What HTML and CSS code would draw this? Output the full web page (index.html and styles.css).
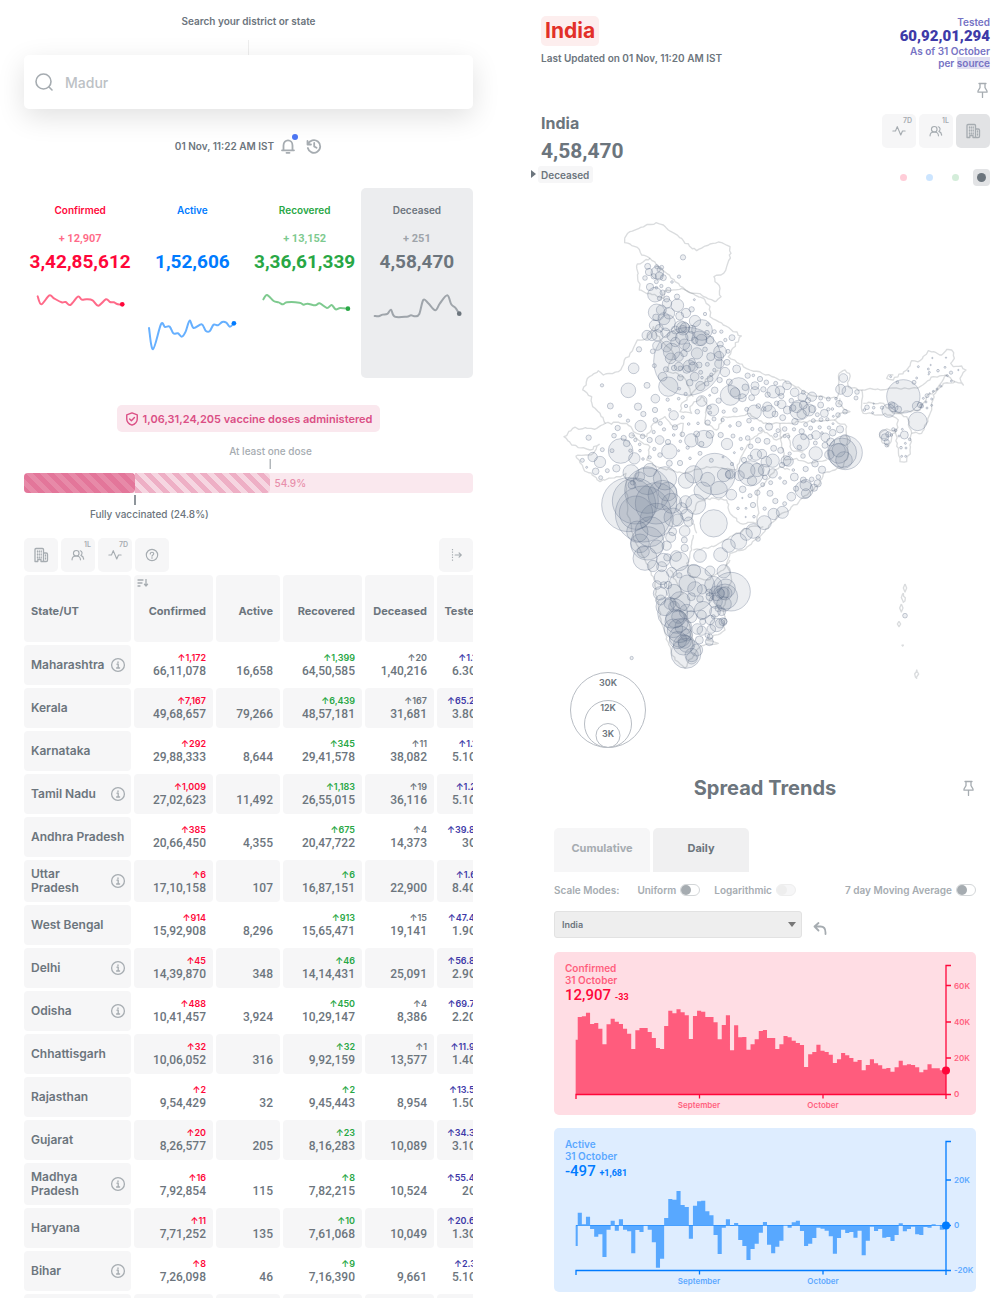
FILE: index.html
```html
<!DOCTYPE html>
<html lang="en">
<head>
<meta charset="utf-8">
<meta name="viewport" content="width=device-width, initial-scale=1">
<title>India</title>
<link rel="stylesheet" href="styles.css">
</head>
<body>
<svg class="sprite" aria-hidden="true">
  <symbol id="i-info" viewBox="0 0 16 16"><circle cx="8" cy="8" r="6.4"/><path d="M7 7.2h1.2v3.6M6.6 11h3M8 4.8v.9"/></symbol>
  <symbol id="i-pin" viewBox="0 0 16 16"><path d="M5 1.500h7M6 1.500v4.200L4 9v1.200h9V9l-2-3.300V1.500M8.500 10.200V15.500"/></symbol>
  <symbol id="i-pulse" viewBox="0 0 16 16"><path d="M1 8h3l2-5 4 9.500 2-4.500h3"/></symbol>
  <symbol id="i-people" viewBox="0 0 16 16"><circle cx="6" cy="6" r="3.200"/><path d="M1.200 13.500c0-2.800 2-4.300 4.800-4.300s4.800 1.500 4.800 4.300M10.500 3.200c2.300.3 3 3.600.8 5.200 1.900.7 3 2 3.200 4.300"/></symbol>
  <symbol id="i-building" viewBox="0 0 16 16"><path d="M2 14.500V2.500q0-1 1-1h6.500q1 0 1 1v12H8v-2H4.800v2zM10.500 6h2.700q1.300 0 1.300 1.300v5.900q0 1.300-1.300 1.300h-2.700"/><path stroke-dasharray="1 2" d="M4.500 4v7M6.300 4v7M8.200 4v7M12.500 8v5"/></symbol>
</svg>
<main class="home">
  <section class="left">
    <label class="search-label" for="search">Search your district or state</label>
    <div class="search-line"></div>
    <div class="search">
      <svg class="icon search-icon" viewBox="0 0 20 20"><circle cx="9.500" cy="9.500" r="7.500"/><path d="M15 15l3 3"/></svg>
      <input id="search" type="text" placeholder="Madur">
    </div>
    <div class="actions">
      <span class="stamp">01 Nov, 11:22 AM IST</span>
      <button class="bare bell" aria-label="Notifications"><svg class="icon i16 bold" viewBox="0 0 16 16"><path d="M2 12.300h12M3.500 12V7.500c0-6.800 9-6.800 9 0V12M6.500 14.800h3"/></svg><i class="badge"></i></button>
      <button class="bare history" aria-label="Timeline"><svg class="icon i16 bold" viewBox="0 0 16 16"><path d="M1.500 3v3.500H5M2 6.300a6.300 6.300 0 1 1-.2 3.700M8.200 5v3.500l2.300 1.300"/></svg></button>
    </div>

    <div class="level">
      <div class="stat confirmed"><h5>Confirmed</h5><h4>+ 12,907</h4><h1>3,42,85,612</h1>
        <svg class="spark" viewBox="72 330 337 220" data-points="113 349,124 373,148 346,162 355,185 367,197 366,211 375,234 350,245 359,260 358,278 361,295 377,318 358,330 366,342 367,354 373,367 373"></svg></div>
      <div class="stat active"><h5>Active</h5><h4></h4><h1>1,52,606</h1>
        <svg class="spark" viewBox="409 330 337 220" data-points="448 444,460 508,484 433,496 441,510 440,521 460,535 460,547 470,558 455,570 422,582 444,606 433,618 452,630 454,642 434,655 436,668 426,680 428,691 440,703 430"></svg></div>
      <div class="stat recovered"><h5>Recovered</h5><h4>+ 13,152</h4><h1>3,36,61,339</h1>
        <svg class="spark" viewBox="746 330 337 220" data-points="789 358,800 345,820 363,835 367,848 373,860 367,897 368,910 374,922 371,945 376,958 370,980 384,994 375,1006 388,1020 384,1043 386"></svg></div>
      <div class="stat deceased is-on"><h5>Deceased</h5><h4>+ 251</h4><h1>4,58,470</h1>
        <svg class="spark" viewBox="1083 330 337 220" data-points="1124 408,1136 409,1148 404,1162 402,1173 389,1184 410,1220 410,1233 406,1246 409,1258 402,1270 360,1285 370,1306 391,1320 370,1342 346,1354 373,1366 383,1378 401"></svg></div>
    </div>

    <div class="pill"><svg class="icon i14" viewBox="0 0 16 16"><path d="M8 1l6 2.200V8c0 3.500-2.500 5.800-6 7-3.500-1.200-6-3.500-6-7V3.200zM5.300 8l2 2 3.500-3.800"/></svg>1,06,31,24,205 vaccine doses administered</div>

    <div class="vaccine">
      <div class="mark one"><span>At least one dose</span><i></i></div>
      <div class="progress"><div class="fill both" style="width:24.8%"></div><div class="fill first" style="width:30.1%"></div><span>54.9%</span></div>
      <div class="mark two"><i></i><span>Fully vaccinated (24.8%)</span></div>
    </div>

    <div class="toolbar">
      <button class="tool" aria-label="Districts"><svg class="icon i16"><use href="#i-building"/></svg></button>
      <button class="tool" aria-label="Per lakh"><svg class="icon i14"><use href="#i-people"/></svg><sup>1L</sup></button>
      <button class="tool" aria-label="Seven day average"><svg class="icon i14"><use href="#i-pulse"/></svg><sup>7D</sup></button>
      <button class="tool" aria-label="Help"><svg class="icon i14" viewBox="0 0 16 16"><circle cx="8" cy="8" r="6.500"/><path d="M6 6.800c0-2.600 4-2.400 4-.2C10 8 8 7.800 8 9.300M8 10.800v1"/></svg></button>
      <button class="tool push" aria-label="Expand table"><svg class="icon i14" viewBox="0 0 16 16"><path stroke-linecap="butt" stroke-dasharray="1.500 1.500" d="M4 1v14"/><path d="M7 8h7M11.500 5.500L14 8l-2.500 2.500"/></svg></button>
    </div>

    <div class="table-wrap">
      <table>
        <colgroup><col class="c1"><col class="c2"><col class="c3"><col class="c4"><col class="c5"><col class="c6"></colgroup>
        <thead><tr><th>State/UT</th><th><svg class="icon sort" viewBox="0 0 12 8"><path d="M1 1h5M1 4h4M1 7h2M9 0v7M7.500 5.300L9 7l1.500-1.700"/></svg>Confirmed</th><th>Active</th><th>Recovered</th><th>Deceased</th><th>Tested</th></tr></thead>
        <tbody>
        <tr><th><div>Maharashtra<svg class="icon i16"><use href="#i-info"/></svg></div></th><td><b class="c">↑1,172</b>66,11,078</td><td>16,658</td><td><b class="r">↑1,399</b>64,50,585</td><td><b>↑20</b>1,40,216</td><td><b class="t">↑1.1L</b>6.3Cr</td></tr>
        <tr><th><div>Kerala</div></th><td><b class="c">↑7,167</b>49,68,657</td><td>79,266</td><td><b class="r">↑6,439</b>48,57,181</td><td><b>↑167</b>31,681</td><td><b class="t">↑65.2K</b>3.8Cr</td></tr>
        <tr><th><div>Karnataka</div></th><td><b class="c">↑292</b>29,88,333</td><td>8,644</td><td><b class="r">↑345</b>29,41,578</td><td><b>↑11</b>38,082</td><td><b class="t">↑1.1L</b>5.1Cr</td></tr>
        <tr><th><div>Tamil Nadu<svg class="icon i16"><use href="#i-info"/></svg></div></th><td><b class="c">↑1,009</b>27,02,623</td><td>11,492</td><td><b class="r">↑1,183</b>26,55,015</td><td><b>↑19</b>36,116</td><td><b class="t">↑1.2L</b>5.1Cr</td></tr>
        <tr><th><div>Andhra Pradesh</div></th><td><b class="c">↑385</b>20,66,450</td><td>4,355</td><td><b class="r">↑675</b>20,47,722</td><td><b>↑4</b>14,373</td><td><b class="t">↑39.8K</b>3Cr</td></tr>
        <tr class="tall"><th><div>Uttar<br>Pradesh<svg class="icon i16"><use href="#i-info"/></svg></div></th><td><b class="c">↑6</b>17,10,158</td><td>107</td><td><b class="r">↑6</b>16,87,151</td><td>22,900</td><td><b class="t">↑1.6L</b>8.4Cr</td></tr>
        <tr><th><div>West Bengal</div></th><td><b class="c">↑914</b>15,92,908</td><td>8,296</td><td><b class="r">↑913</b>15,65,471</td><td><b>↑15</b>19,141</td><td><b class="t">↑47.4K</b>1.9Cr</td></tr>
        <tr><th><div>Delhi<svg class="icon i16"><use href="#i-info"/></svg></div></th><td><b class="c">↑45</b>14,39,870</td><td>348</td><td><b class="r">↑46</b>14,14,431</td><td>25,091</td><td><b class="t">↑56.8K</b>2.9Cr</td></tr>
        <tr><th><div>Odisha<svg class="icon i16"><use href="#i-info"/></svg></div></th><td><b class="c">↑488</b>10,41,457</td><td>3,924</td><td><b class="r">↑450</b>10,29,147</td><td><b>↑4</b>8,386</td><td><b class="t">↑69.7K</b>2.2Cr</td></tr>
        <tr><th><div>Chhattisgarh</div></th><td><b class="c">↑32</b>10,06,052</td><td>316</td><td><b class="r">↑32</b>9,92,159</td><td><b>↑1</b>13,577</td><td><b class="t">↑11.9K</b>1.4Cr</td></tr>
        <tr><th><div>Rajasthan</div></th><td><b class="c">↑2</b>9,54,429</td><td>32</td><td><b class="r">↑2</b>9,45,443</td><td>8,954</td><td><b class="t">↑13.5K</b>1.5Cr</td></tr>
        <tr><th><div>Gujarat</div></th><td><b class="c">↑20</b>8,26,577</td><td>205</td><td><b class="r">↑23</b>8,16,283</td><td>10,089</td><td><b class="t">↑34.3K</b>3.1Cr</td></tr>
        <tr class="tall"><th><div>Madhya<br>Pradesh<svg class="icon i16"><use href="#i-info"/></svg></div></th><td><b class="c">↑16</b>7,92,854</td><td>115</td><td><b class="r">↑8</b>7,82,215</td><td>10,524</td><td><b class="t">↑55.4K</b>2Cr</td></tr>
        <tr><th><div>Haryana</div></th><td><b class="c">↑11</b>7,71,252</td><td>135</td><td><b class="r">↑10</b>7,61,068</td><td>10,049</td><td><b class="t">↑20.6K</b>1.3Cr</td></tr>
        <tr><th><div>Bihar<svg class="icon i16"><use href="#i-info"/></svg></div></th><td><b class="c">↑8</b>7,26,098</td><td>46</td><td><b class="r">↑9</b>7,16,390</td><td>9,661</td><td><b class="t">↑2.3L</b>5.1Cr</td></tr>
        <tr><th></th><td></td><td></td><td></td><td></td><td></td></tr>
        </tbody>
      </table>
    </div>
  </section>

  <section class="right">
    <header class="region">
      <div><h1>India</h1><p class="updated">Last Updated on 01 Nov, 11:20 AM IST</p></div>
      <div class="tested"><span>Tested</span><strong>60,92,01,294</strong><span>As of 31 October</span><span>per <a href="#source">source</a></span></div>
    </header>
    <div class="pin-row"><svg class="icon i16"><use href="#i-pin"/></svg></div>
    <div class="map-head">
      <div>
        <h2>India</h2>
        <p class="total">4,58,470</p>
        <button class="picker">Deceased</button>
      </div>
      <div class="switches">
        <div class="tools">
          <button class="tool" aria-label="Seven day average"><svg class="icon i14"><use href="#i-pulse"/></svg><sup>7D</sup></button>
          <button class="tool" aria-label="Per lakh"><svg class="icon i14"><use href="#i-people"/></svg><sup>1L</sup></button>
          <button class="tool is-on" aria-label="Districts"><svg class="icon i16"><use href="#i-building"/></svg></button>
        </div>
        <div class="dots">
          <button class="dot confirmed" aria-label="Confirmed"></button><button class="dot active" aria-label="Active"></button><button class="dot recovered" aria-label="Recovered"></button><button class="dot deceased is-on" aria-label="Deceased"></button>
        </div>
      </div>
    </div>
    <svg class="map" viewBox="-27 -72 1347 1692">
      <g id="borders"></g>
      <g id="bubbles"></g>
      <g class="legend" transform="scale(3)">
        <circle cx="58" cy="500" r="37.500"/><circle cx="58" cy="514" r="23.500"/><circle cx="58" cy="525.500" r="12"/>
        <text x="58" y="476">30K</text><text x="58" y="501">12K</text><text x="58" y="527">3K</text>
      </g>
    </svg>

    <div class="trends">
      <div class="trends-title"><h2>Spread Trends</h2><svg class="icon i16"><use href="#i-pin"/></svg></div>
      <div class="tabs"><button>Cumulative</button><button class="is-on">Daily</button></div>
      <div class="modes">
        <span class="modes-name">Scale Modes:</span>
        <label>Uniform<input type="checkbox"></label>
        <label>Logarithmic<input type="checkbox" disabled></label>
        <label class="push">7 day Moving Average<input type="checkbox"></label>
      </div>
      <div class="chooser">
        <select aria-label="Region"><option>India</option></select>
        <button class="bare" aria-label="Reset"><svg class="icon i14 bold" viewBox="0 0 14 14"><path d="M5.500 2L1.500 5.500l4 4M1.500 5.500h6q5 0 5 6v1.500"/></svg></button>
      </div>
      <div class="chart confirmed">
        <div class="chart-text"><h5>Confirmed</h5><h5>31 October</h5><p>12,907 <small>-33</small></p></div>
        <svg viewBox="0 0 422 163">
          <g class="bars" data-base="448" data-shift="7" data-tops="284 216 214 203 237 234 251 298 238 221 230 237 251 266 312 256 249 249 261 279 309 312 243 197 205 193 202 211 282 213 197 200 216 216 232 283 240 211 316 241 277 276 314 298 283 258 255 279 279 312 298 273 277 287 294 300 366 328 321 299 317 321 329 354 343 324 331 339 350 345 376 360 343 355 361 371 369 380 367 347 361 358 360 367 382 374 358 370 370 376 377"></g>
          <path class="axis" d="M22 147v-4.500H392M145.500 142.500v4M269 142.500v4M392 147V13.500h5M392 33.500h5M392 70h5M392 106h5M392 142.500h5"/>
          <circle cx="392" cy="118.500" r="4"/>
          <g class="labels"><text x="400" y="37">60K</text><text x="400" y="73">40K</text><text x="400" y="109">20K</text><text x="400" y="145">0</text><text class="mid" x="145" y="156">September</text><text class="mid" x="269" y="156">October</text></g>
        </svg>
      </div>
      <div class="chart active">
        <div class="chart-text"><h5>Active</h5><h5>31 October</h5><p>-497 <small>+1,681</small></p></div>
        <svg viewBox="0 0 422 164">
          <g class="bars" data-base="316" data-shift="8" data-tops="378 278 313 290 327 350 343 411 329 302 332 298 329 334 400 330 336 317 329 367 443 416 294 237 239 213 255 261 356 257 244 242 274 286 345 402 323 298 318 309 360 378 420 387 371 338 306 374 400 380 362 316 323 307 302 333 378 371 354 323 326 332 349 401 354 329 339 336 353 332 406 362 320 333 327 353 351 363 345 310 334 327 320 343 345 321 323 313 316 329 319"></g>
          <path class="zero" d="M22 97.500H392"/>
          <path class="axis" d="M22 147v-4.500H392M145.500 142.500v4M269 142.500v4M392 147V13.500h5M392 52h5M392 97.500h5M392 142.500h5"/>
          <circle cx="392" cy="97.500" r="4"/>
          <g class="labels"><text x="400" y="55">20K</text><text x="400" y="100">0</text><text x="400" y="145">-20K</text><text class="mid" x="145" y="156">September</text><text class="mid" x="269" y="156">October</text></g>
        </svg>
      </div>
    </div>
  </section>
</main>
<script src="script.js"></script>
</body>
</html>
```
FILE: styles.css
```css
* { box-sizing: border-box; margin: 0; padding: 0; }
body {
  height: 100vh; overflow: hidden; background: #fff; color: #6c757d;
  font-family: Inter, "Noto Sans", sans-serif; font-size: 12px; font-weight: 600;
}
button, input, select { font: inherit; color: inherit; border: 0; background: none; }
button { cursor: pointer; }
h1, h2, h4, h5 { font-weight: 700; }
.sprite { position: absolute; width: 0; height: 0; }
.icon { fill: none; stroke: #a6acb1; stroke-width: 1.3; stroke-linecap: round; stroke-linejoin: round; flex: none; }
.icon.bold { stroke-width: 1.8; }
.i16 { width: 16px; height: 16px; }
.i14 { width: 14px; height: 14px; }
.push { margin-left: auto; }

.home { display: grid; grid-template-columns: minmax(0, 1fr) minmax(0, 1fr); gap: 68px; padding: 0 17px 0 24px; }
.left { display: flex; flex-direction: column; padding-top: 14px; }
.right { padding-top: 16px; }

.search-label { font-size: 10px; line-height: 14px; text-align: center; }
.search-line { width: 1px; height: 15px; margin: 12px auto 0; background: #eee; }
.search { display: flex; align-items: center; gap: 11px; height: 54px; padding: 0 10px; border-radius: 5px; background: #fff; box-shadow: 0 8px 28px rgba(0, 0, 0, .12); }
.search-icon { width: 20px; height: 20px; stroke-width: 1.6; }
.search input { flex: 1; min-width: 0; outline: 0; font-size: 14px; font-weight: 500; }
.search input::placeholder { color: #bcc1c5; opacity: 1; }
.actions { display: flex; justify-content: center; align-items: center; gap: 6px; height: 20px; margin-top: 27px; }
.stamp { font-size: 10px; }
.bare { display: flex; position: relative; }
.history { margin-left: 4px; }
.badge { position: absolute; right: -2px; top: -4px; width: 6px; height: 6px; border-radius: 50%; background: #4c75f2; }

.level { display: grid; grid-template-columns: repeat(4, 1fr); margin-top: 32px; text-align: center; }
.stat { display: flex; flex-direction: column; padding: 15px 0; border-radius: 5px; --tone: #6c757d; color: var(--tone); }
.stat.is-on { background: #ecedef; }
.confirmed { --tone: #ff073a; }
.active { --tone: #007bff; }
.recovered { --tone: #28a745; }
.deceased { --tone: #6c757d; }
.stat h5 { font-size: 10px; line-height: 14px; font-weight: 600; }
.stat h4 { height: 14px; margin-top: 15px; font-family: Roboto, sans-serif; font-size: 11px; line-height: 14px; opacity: .6; }
.stat h1 { margin-top: 4px; font-family: Roboto, sans-serif; font-size: 19px; line-height: 24px; }
.spark { width: 100%; margin-top: 16px; overflow: visible; }
.spark path { fill: none; stroke: var(--tone); stroke-opacity: .6; stroke-width: 6; stroke-linecap: round; }
.spark circle { fill: var(--tone); }

.pill { display: flex; align-items: center; gap: 4px; align-self: center; height: 27px; margin-top: 27px; padding: 0 8px; border-radius: 5px; background: #fae8ee; color: #db4f85; font-size: 11px; }
.pill .icon { stroke: #db4f85; stroke-width: 1.6; }
.vaccine { display: flex; flex-direction: column; margin-top: 12px; font-size: 10px; line-height: 14px; font-weight: 500; }
.mark { display: flex; flex-direction: column; align-items: center; width: max-content; transform: translateX(-50%); }
.mark i { width: 1px; height: 10px; background: #8e959b; }
.mark.one { margin-left: 54.9%; color: #a6acb1; gap: 1px; }
.mark.two { margin: 2px 0 0 24.8%; gap: 2px; }
.mark.two i { width: 2px; }
.mark.two span { padding-left: 14px; margin-right: -14px; }
.mark.two { width: 0; }
.mark.two span { white-space: nowrap; }
.progress { display: flex; align-items: center; height: 20px; margin-top: 4px; border-radius: 4px; overflow: hidden; background: #fae8ee; }
.progress span { margin-left: 4px; color: #e88fab; }
.fill { height: 100%; border-radius: 0 4px 4px 0; }
.fill.both { background: repeating-linear-gradient(45deg, #e3769a 0 5px, #e78aa8 5px 10px); }
.fill.first { background: repeating-linear-gradient(45deg, #eeafc5 0 5px, #f6d6e1 5px 10px); }

.toolbar, .tools { display: flex; gap: 3px; }
.toolbar { margin-top: 17px; }
.tool { position: relative; display: grid; place-items: center; width: 34px; height: 34px; border-radius: 5px; background: #f6f6f7; }
.tool.is-on { background: #e2e3e5; }
.tool sup { position: absolute; top: 3px; right: 4px; font-size: 7px; line-height: 8px; color: #a6acb1; }

.table-wrap { margin-top: 3px; overflow: hidden; }
table { width: 470px; margin: -3px; table-layout: fixed; border-collapse: separate; border-spacing: 3px; }
.c1 { width: 107px; } .c2 { width: 79px; } .c3 { width: 64px; } .c4 { width: 79px; } .c5 { width: 69px; } .c6 { width: 51px; }
thead th { position: relative; height: 67px; padding: 4px 7px 0; background: #f6f6f7; border-radius: 4px; font-size: 11px; font-weight: 700; text-align: right; }
thead th:first-child { text-align: left; }
.sort { position: absolute; left: 3px; top: 4px; width: 12px; height: 8px; }
tbody th, td { height: 40px; border-radius: 4px; }
.tall th, .tall td { height: 42px; }
tbody th { background: #f6f6f7; text-align: left; line-height: 14px; padding-left: 7px; font-weight: 600; }
tbody th div { display: flex; align-items: center; justify-content: space-between; padding-right: 5px; white-space: nowrap; }
td { padding: 5px 7px 7px 0; vertical-align: bottom; text-align: right; font-family: Roboto, sans-serif; font-weight: 500; line-height: 14px; white-space: nowrap; }
td b { display: block; font-family: Inter, sans-serif; font-size: 9px; line-height: 12px; font-weight: 600; }
tbody tr:nth-child(even) td { background: #f6f6f7; }
.c { color: #ff073a; } .r { color: #28a745; } .t { color: #3e3aa8; }

.region { display: flex; justify-content: space-between; }
.region h1 { width: max-content; height: 30px; padding: 0 4px; border-radius: 5px; background: #fdeeee; color: #e23028; font-size: 21px; line-height: 30px; }
.updated { margin-top: 5px; font-size: 10px; line-height: 14px; }
.tested { display: flex; flex-direction: column; align-items: flex-end; color: #7673c4; font-size: 10px; line-height: 12px; }
.tested strong { color: #3e3aa8; font-family: Roboto, sans-serif; font-size: 15px; line-height: 17px; }
.tested a { color: inherit; text-decoration: none; background: #e0dff2; }
.pin-row { display: flex; justify-content: flex-end; margin-top: 13px; }
.map-head { display: flex; justify-content: space-between; height: 72px; margin-top: 16px; }
.map-head h2 { font-size: 16px; line-height: 18px; }
.total { margin-top: 7px; font-family: Roboto, sans-serif; font-size: 21px; line-height: 24px; font-weight: 700; }
.picker { display: block; position: relative; height: 17px; margin: 3px 0 0 -3px; padding: 0 4px 0 3px; border-radius: 3px; background: #f6f6f7; font-size: 10px; line-height: 16px; }
.picker::before { content: ""; position: absolute; left: -7px; top: 4px; border: 4px solid transparent; border-left: 5px solid #6c757d; border-right: 0; }
.switches { display: flex; flex-direction: column; justify-content: space-between; align-items: flex-end; }
.dots { display: flex; gap: 9px; }
.dot { display: grid; place-items: center; width: 17px; height: 17px; border-radius: 4px; }
.dot::before { content: ""; width: 7px; height: 7px; border-radius: 50%; background: var(--tone); opacity: .2; }
.dot.is-on { background: #e2e3e5; }
.dot.is-on::before { width: 9px; height: 9px; opacity: 1; }

.map { display: block; width: 100%; }
#borders path { fill: none; stroke: #6c757d; stroke-opacity: .25; stroke-width: 4; stroke-linejoin: round; }
#bubbles circle { fill: #64748b; fill-opacity: .12; stroke: #64748b; stroke-opacity: .42; stroke-width: 2.5; }
.legend circle { fill: none; stroke: #b8bdc4; }
.legend text { font-size: 9px; text-anchor: middle; fill: #6c757d; }

.trends { padding: 25px 14px 0 13px; }
.trends-title { display: grid; grid-template-columns: 16px 1fr 16px; align-items: center; }
.trends-title h2 { grid-column: 2; text-align: center; font-size: 20px; line-height: 26px; }
.tabs { display: flex; gap: 3px; margin-top: 27px; }
.tabs button { width: 96px; height: 44px; padding-bottom: 4px; border-radius: 5px 5px 0 0; background: #f6f6f7; color: #a6acb1; font-size: 11px; font-weight: 700; }
.tabs .is-on { background: #f0f0f1; color: #6c757d; }
.modes { display: flex; align-items: center; gap: 14px; margin-top: 11px; color: #a6acb1; font-size: 10px; line-height: 14px; }
.modes-name { margin-right: 4px; }
.modes label { display: flex; align-items: center; gap: 4px; }
.modes input { appearance: none; display: flex; width: 20px; height: 12px; border: 1px solid #d3d6d8; border-radius: 6px; }
.modes input::before { content: ""; width: 10px; height: 10px; border-radius: 50%; background: #a6acb1; }
.modes input:disabled { background: #f6f6f7; border-color: #eee; }
.modes input:disabled::before { background: #eee; }
.chooser { display: flex; position: relative; align-items: flex-end; gap: 11px; margin-top: 14px; }
.chooser select { appearance: none; width: 248px; height: 27px; padding: 0 7px; border: 1px solid #e2e2e2; border-radius: 3px; font-size: 9px; background: #eee; }
.chooser::after { content: ""; position: absolute; left: 234px; top: 11px; border: 4px solid transparent; border-top: 5px solid #777; border-bottom: 0; pointer-events: none; }
.chooser .bare { padding-bottom: 3px; }
.chart { position: relative; margin-top: 14px; border-radius: 5px; background: #ffdde4; color: var(--tone); }
.chart + .chart { margin-top: 13px; }
.chart.active { background: #deedff; }
.chart > svg { display: block; width: 100%; }
.chart-text { position: absolute; left: 11px; top: 10px; }
.chart-text h5 { font-size: 10px; line-height: 12px; font-weight: 600; opacity: .6; }
.chart-text p { font-family: Roboto, sans-serif; font-size: 15px; line-height: 19px; font-weight: 500; }
.chart-text small { font-size: 9px; font-weight: 700; }
.bars { fill: var(--tone); opacity: .6; }
.chart circle { fill: var(--tone); }
.axis { fill: none; stroke: var(--tone); stroke-width: 1.3; }
.zero { fill: none; stroke: var(--tone); stroke-opacity: .6; }
.labels { fill: var(--tone); opacity: .6; font-size: 8px; }
.mid { text-anchor: middle; }
```
FILE: script.js
```js
const NS = 'http://www.w3.org/2000/svg';
const add = (parent, name, attrs) => {
  const el = document.createElementNS(NS, name);
  for (const k in attrs) el.setAttribute(k, attrs[k]);
  parent.appendChild(el);
};
const parse = (s) => s.trim().split(/\s*,\s*/).map((p) => p.split(/\s+/).map(Number));

// Sparklines: a Catmull-Rom curve and an end dot.
document.querySelectorAll('.spark').forEach((svg) => {
  const p = parse(svg.dataset.points);
  let d = `M${p[0]}`;
  for (let i = 0; i < p.length - 1; i++) {
    const a = p[i - 1] || p[i], b = p[i], c = p[i + 1], e = p[i + 2] || c;
    d += `C${b[0] + (c[0] - a[0]) / 6} ${b[1] + (c[1] - a[1]) / 6} ${c[0] - (e[0] - b[0]) / 6} ${c[1] - (e[1] - b[1]) / 6} ${c[0]} ${c[1]}`;
  }
  add(svg, 'path', { d });
  const [cx, cy] = p[p.length - 1];
  add(svg, 'circle', { cx, cy, r: 7 });
});

// Daily bars, one step outline per chart.
document.querySelectorAll('.bars').forEach((g) => {
  const base = +g.dataset.base, step = 1111 / 90;
  let d = `M92 ${base}`;
  g.dataset.tops.split(' ').forEach((t, i) => {
    const x0 = Math.max(92, 92 + step * (i - 0.5)), x1 = Math.min(1203, 92 + step * (i + 0.5));
    d += `L${x0} ${t}L${x1} ${t}`;
  });
  add(g, 'path', { d: `${d}L1203 ${base}Z`, transform: `translate(-9 -${g.dataset.shift}) scale(.33333)` });
});

// State borders, roughened between the listed points.
let seed = 7;
const rand = () => { seed = (seed * 16807) % 2147483647; return seed / 2147483647 - 0.5; };
const borders = document.getElementById('borders');
const border = (s, dx = 0, dy = 0) => {
  const p = parse(s);
  let d = `M${p[0][0] + dx} ${p[0][1] + dy}`;
  for (let i = 1; i < p.length; i++) {
    const [ax, ay] = p[i - 1], [bx, by] = p[i];
    const n = Math.max(1, Math.round(Math.hypot(bx - ax, by - ay) / 9));
    for (let k = 1; k <= n; k++) {
      const j = k < n ? 7 : 0;
      d += `L${(ax + (bx - ax) * k / n + dx + rand() * j).toFixed(1)} ${(ay + (by - ay) * k / n + dy + rand() * j).toFixed(1)}`;
    }
  }
  add(borders, 'path', { d });
};
border('224 85,240 65,272 52,318 38,340 45,355 60,395 85,405 100,440 122,480 102,505 96,540 110,543 130,530 170,513 195,492 200,495 215,510 235,513 260,495 275,468 262,440 250,418 247,390 228,350 190,320 165,300 145,275 135,262 112,240 102,224 98,224 85');
border('300 145,262 162,268 240,300 250,340 265,350 240,395 235,460 265,480 290,480 320,520 345,574 378,548 415,535 440,600 480,680 505,720 520,780 555,860 565,868 545,868 490,885 480,898 490,895 530,935 540');
border('290 385,262 390,240 430,205 485,160 495,145 482,118 500,98 540,125 560,128 590,150 610,165 640,140 655,68 655,42 680,65 705,120 720,148 703,130 730,78 738,100 775,150 815,200 800,228 790,228 830,235 920,250 980,285 1050,310 1100,325 1190,345 1270,375 1350,405 1375');
border('405 745,440 690,470 672,505 670,470 660,525 630,525 590,520 560,545 480,530 430,540 400,580 390,630 350,680 290,720 270', 0, 630);
border('90 570,120 540,180 490,190 460,250 440,265 400,260 320,225 300,240 280,270 275,250 265,235 250,240 235', 630, 330);
border('305 210,330 205,380 208,440 205,480 200,520 170,560 165,585 185,610 195,600 175,618 150,605 138,580 140,572 130,583 115,575 90,560 88,545 105,505 92,480 122,455 122,440 150,400 180,380 175,385 165,400 165', 630, 330);
border('305 210,305 250,310 280,360 285,375 280,400 290,415 300,408 330,412 370,420 425,440 425,450 390,455 340,485 340,500 310,515 270,520 225,550 190,585 185', 630, 330);
border('360 340,375 330,408 330,395 350,385 380,365 365,360 340', 630, 330);
border('310 250,370 250,400 280,480 270,500 230,520 215,560 165', 630, 330);
border('395 275,440 290,455 340', 630, 330);
border('505 480,440 535,395 580,390 605,425 610,420 590,455 560,470 580,465 640,500 660,520 620,560 620,600 610,640 640,690 640,760 635,855 630');
border('165 640,230 640,250 665,290 680,310 640,345 620,370 650,400 640,395 680');
border('245 45,265 60,300 80,290 120,320 140,400 160,470 140,560 150,570 120,600 60,640 30,680 60,715 40,725 90,760 95', 0, 630);
border('440 340,425 300,440 250,470 235,530 240,540 280,570 310,620 310,625 270,620 220,650 180,690 140,720 150', 0, 630);
border('430 390,490 380,540 350,600 320,640 320', 0, 630);
border('430 345,425 390,410 430,420 470,470 480,520 450,540 420', 0, 630);
border('360 450,400 520,370 540,420 610,430 680', 0, 630);
border('60 310,65 370,75 420,110 415,145 430,200 420', 630, 330);
border('290 385,310 350,330 390,370 430,350 480,400 500,430 560');
[[1065, 1134, 5, 12], [1060, 1163, 6, 14], [1054, 1194, 5, 12], [1047, 1242, 5, 8], [1058, 1306, 2, 2], [1100, 1392, 6, 13]].forEach(([x, y, a, b]) =>
  border(`${x} ${y - b},${x + a} ${y},${x} ${y + b},${x - a} ${y},${x} ${y - b}`));

// District bubbles: x, y, radius.
const bubbles = document.getElementById('bubbles');
const plot = (s, dx = 0, dy = 0) => parse(s).forEach(([x, y, r]) => add(bubbles, 'circle', { cx: x + dx, cy: y + dy, r }));
plot(`399 142 8,387 200 5,366 216 4,433 269 3,293 169 9,297 186 11,285 204 7,320 170 6,322 188 19,335 172 6,311 199 8,340 203 9,319 215 6,328 198 12,326 180 5,300 231 11,315 254 22,334 228 5,355 240 8,319 233 4,338 248 8,329 265 7,381 260 8,350 267 9,351 280 14,382 286 19,425 298 8,465 312 5,320 307 25,334 300 15,357 310 17,408 309 14,389 318 12,342 326 18,318 322 10,352 338 24,435 333 17,314 346 16,328 355 12,391 350 18,399 355 20,405 352 14,398 358 12,456 360 31,426 358 12,473 343 5,291 376 15,306 377 15,322 376 17,376 360 12,366 378 15,346 368 14,395 384 19,421 378 14,448 385 22,454 390 17,480 390 12,471 368 7,493 365 6,514 365 5,546 383 9,526 390 5,267 418 8,322 407 14,308 424 7,350 410 16,376 396 14,403 403 16,412 412 13,434 391 10,511 403 9,510 425 19,507 438 14,482 440 12,365 425 25,386 440 14,362 445 16,402 430 10,441 430 17,465 418 7,534 424 6,413 454 102,531 457 9,508 461 14,447 465 9,426 455 10,418 468 18,410 478 12,430 470 14,386 470 13,391 475 7,372 474 8,348 478 8,313 467 6,472 463 6,251 475 16,235 541 22,156 526 5,291 526 9,338 500 13,355 530 29,391 503 9,419 518 10,434 500 13,452 487 6,456 503 4,484 494 5,493 480 5,480 506 9,525 486 14,560 477 12,593 497 8,610 496 4,630 507 8,509 510 8,538 516 9,451 528 14,470 521 7,494 541 10,407 552 5,388 536 4,566 535 32,541 556 30,586 532 10,555 547 14,615 527 12,615 543 13,649 517 7,677 520 6,711 526 13,640 538 8,670 545 19,690 542 14,605 563 9,577 563 12,694 558 8,653 554 8,316 566 13,353 569 5,386 566 4,455 573 16,408 588 5,479 556 3,506 572 8,181 588 9,264 590 11,315 600 8,280 612 8,359 599 4,371 616 14,398 622 5,442 605 7,488 600 18,478 592 6,480 608 5,521 605 5,555 600 7,590 598 6,613 606 21,625 588 7,641 597 7,658 605 19,652 590 14,695 583 13,680 580 7,675 612 9,698 623 9,712 600 12,210 617 5,234 632 5,316 630 7,331 640 6,444 640 4,416 642 4,473 638 8,492 627 6,518 630 5,540 648 4,566 642 8,597 632 7,272 648 17,203 654 8,311 666 5,342 658 5,375 652 8,607 657 5,631 658 6,657 650 11,684 662 6,704 657 7`);
plot(`116 53 8,192 47 7,245 46 8,221 54 8,230 70 10,212 93 37,256 60 5,278 49 7,269 73 4,299 60 8,329 60 13,371 45 4,354 66 8,397 43 7,391 64 4,424 61 20,462 57 26,440 42 9,480 43 12,454 72 8,413 83 5,512 45 8,549 48 6,531 72 17,572 57 5,593 54 7,553 98 3,575 86 4,602 79 7,624 61 8,651 64 9,677 46 6,704 48 5,671 85 9,692 91 9,157 89 6,186 92 6,241 92 5,270 92 4,313 87 5,358 94 23,330 105 7,386 92 3,450 100 6,97 121 6,128 111 14,150 126 17,110 142 3,137 154 10,172 152 6,152 173 6,199 145 11,253 115 17,279 117 4,299 112 5,358 130 9,390 129 8,420 115 4,484 121 6,519 111 3,494 162 62,546 132 5,582 120 8,600 112 7,618 104 17,636 102 14,649 125 16,668 122 20,696 135 8,708 122 15,602 160 38,591 152 24,622 150 20,568 167 15,642 150 17,668 160 14,606 182 14,645 172 7,538 163 12,522 165 20,541 163 14,473 178 21,431 163 26,507 209 25,408 182 23,458 212 26,544 224 16,578 208 10,600 227 6,622 218 8,577 234 2,660 220 9,662 188 6,690 174 4,704 187 6,638 194 6,676 243 8,704 251 6,609 255 8,564 265 4,588 265 3,644 266 5,587 291 2,612 290 4,491 310 41,643 308 21,671 282 17,697 277 18,610 333 22,589 343 18,566 364 24,536 377 20,512 404 21,624 357 7,450 408 19,
236 254 81,256 243 69,292 212 68,280 282 84,258 278 50,318 250 62,320 300 50,338 225 44,345 175 35,292 182 42,300 150 20,243 158 24,270 170 14,246 195 12,248 188 7,352 215 28,365 250 30,370 292 28,262 335 32,300 335 45,383 300 18,368 335 12,362 352 15,292 370 50,270 370 28,280 395 18,320 380 20,350 377 14,285 415 36,309 438 17,404 333 16,403 360 9,404 384 11,437 253 30,407 245 18,395 265 17,416 305 14,410 285 18,340 420 20,352 412 11,378 408 16,388 424 28,335 440 15,365 457 15,335 472 22,388 466 8,321 495 13,341 495 10,354 495 11,432 453 20,425 505 70,412 490 25,480 453 15,521 454 20,543 515 58,490 495 26,528 505 28,435 507 22,456 508 14,372 515 22,330 520 20,390 545 30,345 560 27,332 540 15,424 530 12,450 537 10,477 517 10,520 520 18,526 520 20,510 520 14,500 520 22,525 530 38,497 545 20,522 552 22,480 530 12,368 580 45,360 550 18,372 560 16,385 590 20,380 605 35,375 595 28,410 575 22,423 590 18,459 570 26,455 585 14,458 605 9,495 575 16,505 565 10,490 590 6,370 625 28,388 632 36,400 620 25,390 650 32,384 660 26,410 645 18,442 627 16,400 675 30,404 665 20,410 672 25,408 700 45,425 705 20,440 690 18,425 715 17,448 660 12,455 632 14,484 627 13,500 615 20,510 610 14,519 605 12,522 604 9,478 665 12,472 646 7,480 650 8,515 575 12,480 600 14,245 714 5`, 0, 630);
plot(`104 217 13,130 217 6,127 232 13,156 230 14,144 241 8,119 270 30,125 282 14,110 262 16,130 255 12,98 264 10,105 305 10,94 242 7,147 270 18,157 267 11,182 234 6,182 255 9,205 237 6,228 236 4,237 251 10,172 284 6,193 280 12,205 268 5,217 267 4,234 285 7,255 275 7,183 299 6,202 298 5,220 289 3,160 302 6,137 314 6,219 311 3,152 324 6,179 322 5,207 323 5,240 328 11,218 338 10,196 352 13,186 339 4,168 345 13,151 351 8,131 350 9,125 334 8,102 328 5,123 367 25,118 382 7,166 369 6,195 376 9,212 366 12,167 400 20,129 408 7,89 401 5,85 350 4,85 424 15,137 447 8,165 431 10,186 449 11,103 471 12,100 450 4,130 480 9,155 478 7,175 471 7,173 490 11,162 503 11,132 509 27,137 495 17,138 520 14,108 506 8,94 530 13,256 398 51,246 398 44,236 391 20,255 360 16,252 420 25,236 400 30,208 404 14,250 174 13,242 208 15,262 214 16,291 216 7,288 234 6,321 262 7,341 251 2,341 263 4,338 278 3,313 270 4,366 263 5,386 272 20,430 229 50,395 255 10,392 170 3,412 187 4,462 187 6,470 174 3,400 262 14,415 268 10,471 258 14,480 255 8,485 258 6,473 304 28,433 345 12,417 348 3,427 328 3,449 358 4,436 370 3,423 383 4,438 384 3,425 409 3,437 409 3,372 343 14,375 352 11,380 366 8,380 376 5,385 343 8,400 328 5,394 345 4,407 331 4,445 153 2,475 140 3,505 147 3,512 135 2,517 114 2,558 113 2,555 142 3,508 157 3,534 152 4,506 163 2,573 158 5,595 150 2,562 167 3,574 183 3,542 198 3,531 207 3,520 214 3,509 220 2,501 227 6,515 237 3,498 246 3,515 256 3,501 264 3,490 235 3,435 887 7`, 630, 330);
```
